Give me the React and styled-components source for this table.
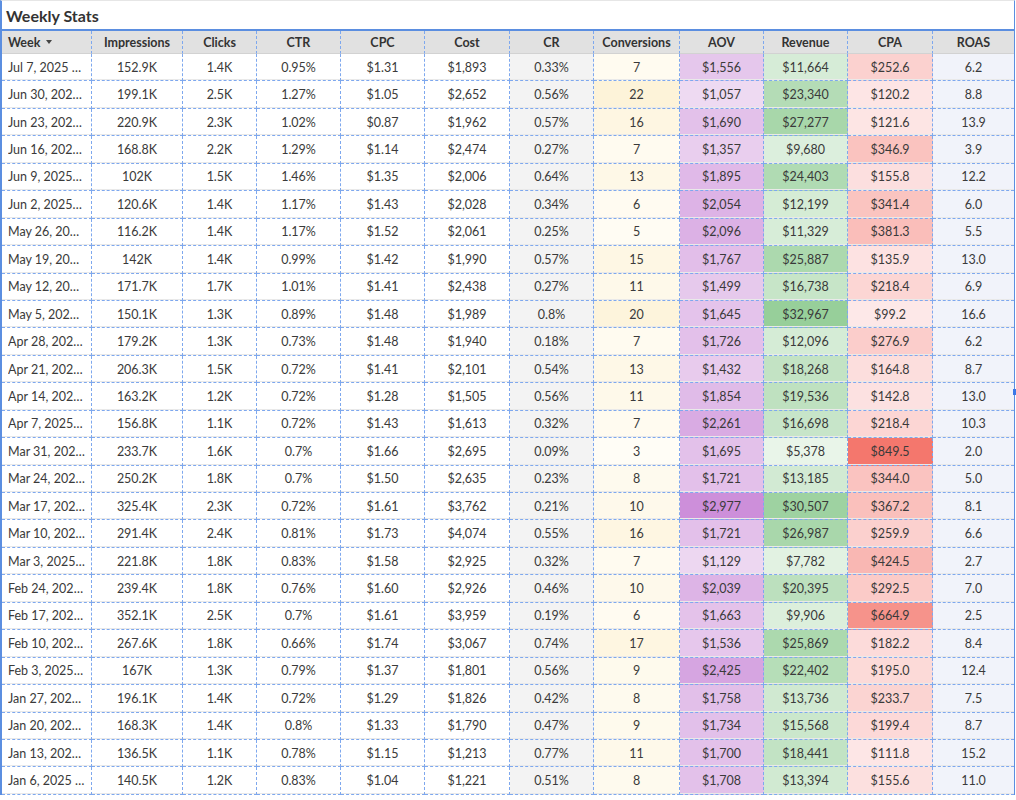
import React from "react";
import styled, { createGlobalStyle } from "styled-components";

const GlobalStyle = createGlobalStyle`
  html, body {
    margin: 0;
    padding: 0;
    background: #fff;
  }
  body {
    font-family: Lato, "Open Sans", sans-serif;
    color: #333;
  }
`;

const ROWS = [
  ["Jul 7, 2025 - Jul 13, 2025", "152.9K", "1.4K", "0.95%", "$1.31", "$1,893", "0.33%", 7, 1556, 11664, 252.6, "6.2"],
  ["Jun 30, 2025 - Jul 6, 2025", "199.1K", "2.5K", "1.27%", "$1.05", "$2,652", "0.56%", 22, 1057, 23340, 120.2, "8.8"],
  ["Jun 23, 2025 - Jun 29, 2025", "220.9K", "2.3K", "1.02%", "$0.87", "$1,962", "0.57%", 16, 1690, 27277, 121.6, "13.9"],
  ["Jun 16, 2025 - Jun 22, 2025", "168.8K", "2.2K", "1.29%", "$1.14", "$2,474", "0.27%", 7, 1357, 9680, 346.9, "3.9"],
  ["Jun 9, 2025 - Jun 15, 2025", "102K", "1.5K", "1.46%", "$1.35", "$2,006", "0.64%", 13, 1895, 24403, 155.8, "12.2"],
  ["Jun 2, 2025 - Jun 8, 2025", "120.6K", "1.4K", "1.17%", "$1.43", "$2,028", "0.34%", 6, 2054, 12199, 341.4, "6.0"],
  ["May 26, 2025 - Jun 1, 2025", "116.2K", "1.4K", "1.17%", "$1.52", "$2,061", "0.25%", 5, 2096, 11329, 381.3, "5.5"],
  ["May 19, 2025 - May 25, 2025", "142K", "1.4K", "0.99%", "$1.42", "$1,990", "0.57%", 15, 1767, 25887, 135.9, "13.0"],
  ["May 12, 2025 - May 18, 2025", "171.7K", "1.7K", "1.01%", "$1.41", "$2,438", "0.27%", 11, 1499, 16738, 218.4, "6.9"],
  ["May 5, 2025 - May 11, 2025", "150.1K", "1.3K", "0.89%", "$1.48", "$1,989", "0.8%", 20, 1645, 32967, 99.2, "16.6"],
  ["Apr 28, 2025 - May 4, 2025", "179.2K", "1.3K", "0.73%", "$1.48", "$1,940", "0.18%", 7, 1726, 12096, 276.9, "6.2"],
  ["Apr 21, 2025 - Apr 27, 2025", "206.3K", "1.5K", "0.72%", "$1.41", "$2,101", "0.54%", 13, 1432, 18268, 164.8, "8.7"],
  ["Apr 14, 2025 - Apr 20, 2025", "163.2K", "1.2K", "0.72%", "$1.28", "$1,505", "0.56%", 11, 1854, 19536, 142.8, "13.0"],
  ["Apr 7, 2025 - Apr 13, 2025", "156.8K", "1.1K", "0.72%", "$1.43", "$1,613", "0.32%", 7, 2261, 16698, 218.4, "10.3"],
  ["Mar 31, 2025 - Apr 6, 2025", "233.7K", "1.6K", "0.7%", "$1.66", "$2,695", "0.09%", 3, 1695, 5378, 849.5, "2.0"],
  ["Mar 24, 2025 - Mar 30, 2025", "250.2K", "1.8K", "0.7%", "$1.50", "$2,635", "0.23%", 8, 1721, 13185, 344.0, "5.0"],
  ["Mar 17, 2025 - Mar 23, 2025", "325.4K", "2.3K", "0.72%", "$1.61", "$3,762", "0.21%", 10, 2977, 30507, 367.2, "8.1"],
  ["Mar 10, 2025 - Mar 16, 2025", "291.4K", "2.4K", "0.81%", "$1.73", "$4,074", "0.55%", 16, 1721, 26987, 259.9, "6.6"],
  ["Mar 3, 2025 - Mar 9, 2025", "221.8K", "1.8K", "0.83%", "$1.58", "$2,925", "0.32%", 7, 1129, 7782, 424.5, "2.7"],
  ["Feb 24, 2025 - Mar 2, 2025", "239.4K", "1.8K", "0.76%", "$1.60", "$2,926", "0.46%", 10, 2039, 20395, 292.5, "7.0"],
  ["Feb 17, 2025 - Feb 23, 2025", "352.1K", "2.5K", "0.7%", "$1.61", "$3,959", "0.19%", 6, 1663, 9906, 664.9, "2.5"],
  ["Feb 10, 2025 - Feb 16, 2025", "267.6K", "1.8K", "0.66%", "$1.74", "$3,067", "0.74%", 17, 1536, 25869, 182.2, "8.4"],
  ["Feb 3, 2025 - Feb 9, 2025", "167K", "1.3K", "0.79%", "$1.37", "$1,801", "0.56%", 9, 2425, 22402, 195.0, "12.4"],
  ["Jan 27, 2025 - Feb 2, 2025", "196.1K", "1.4K", "0.72%", "$1.29", "$1,826", "0.42%", 8, 1758, 13736, 233.7, "7.5"],
  ["Jan 20, 2025 - Jan 26, 2025", "168.3K", "1.4K", "0.8%", "$1.33", "$1,790", "0.47%", 9, 1734, 15568, 199.4, "8.7"],
  ["Jan 13, 2025 - Jan 19, 2025", "136.5K", "1.1K", "0.78%", "$1.15", "$1,213", "0.77%", 11, 1700, 18441, 111.8, "15.2"],
  ["Jan 6, 2025 - Jan 12, 2025", "140.5K", "1.2K", "0.83%", "$1.04", "$1,221", "0.51%", 8, 1708, 13394, 155.6, "11.0"],
];

const HEADERS = ["Week", "Impressions", "Clicks", "CTR", "CPC", "Cost", "CR", "Conversions", "AOV", "Revenue", "CPA", "ROAS"];
const WIDTHS = "90px 91px 74px 84px 84px 85px 84px 86px 84px 84px 85px 81px";

// heatmap columns: light colour for the minimum, strong colour for the maximum
const SCALES = {
  7: ["#fffdf6", "#fdf3d9"],
  8: ["#eedaf2", "#cd8fda"],
  9: ["#e9f5e9", "#97cf9a"],
  10: ["#fde8e8", "#f4776d"],
};

const hex = (h) => [1, 3, 5].map((i) => parseInt(h.slice(i, i + 2), 16));
const mix = (a, b, t) => {
  const ca = hex(a);
  const cb = hex(b);
  return `rgb(${ca.map((v, i) => Math.round(v + (cb[i] - v) * t)).join(",")})`;
};

const ranges = {};
Object.keys(SCALES).forEach((k) => {
  const vals = ROWS.map((r) => r[k]);
  ranges[k] = [Math.min(...vals), Math.max(...vals)];
});

const fmt = (col, v) => {
  if (col === 8 || col === 9) return "$" + v.toLocaleString("en-US");
  if (col === 10) return "$" + v.toFixed(1);
  return v;
};

const Frame = styled.div`
  position: relative;
  width: 1015px;
  box-sizing: border-box;
  border-left: 2px solid #5b8ee0;
  border-right: 1px solid #5b8ee0;
  border-top: 1px solid #e6e6e6;
  font-family: Lato, "Open Sans", sans-serif;
`;

const Title = styled.div`
  height: 28px;
  display: flex;
  align-items: center;
  padding-left: 4px;
  font-size: 16px;
  font-weight: 700;
  color: #333;
  border-bottom: 2px solid #5b8ee0;
`;

const Row = styled.div`
  display: grid;
  grid-template-columns: ${WIDTHS};
  height: ${(p) => (p.$head ? "23px" : "27.45px")};
  background: ${(p) => (p.$head ? "#e1e1e1" : "#fff")};
`;

const Cell = styled.div`
  box-sizing: border-box;
  display: flex;
  align-items: center;
  justify-content: ${(p) => (p.$left ? "flex-start" : "center")};
  padding: ${(p) => (p.$left ? "0 6px 0 6px" : "0 4px")};
  font-size: 12.5px;
  font-weight: ${(p) => (p.$head ? 700 : 400)};
  color: ${(p) => (p.$head ? "#333" : "#3a3a3a")};
  border-right: ${(p) => (p.$last ? "none" : "1px dashed #7ea8ee")};
  border-bottom: ${(p) => (p.$head ? "1px solid #d2d2d2" : "1px dashed #7ea8ee")};
  box-shadow: ${(p) => (p.$head ? "none" : "inset 0 -1px 0 #e9e9e9")};
  white-space: nowrap;
  overflow: hidden;
  min-width: 0;
`;

const Ellipsis = styled.span`
  overflow: hidden;
  text-overflow: ellipsis;
  white-space: nowrap;
  min-width: 0;
`;

const Caret = styled.svg`
  margin-left: 6px;
  flex: none;
`;

const Handle = styled.div`
  position: absolute;
  right: -3px;
  top: 388px;
  width: 4px;
  height: 6px;
  background: #3b78e7;
`;

const staticBg = { 6: "#f3f3f3", 11: "#f1f3fa" };

export default function App() {
  return (
    <>
      <GlobalStyle />
      <Frame>
        <Title>Weekly Stats</Title>
        <Row $head>
          {HEADERS.map((h, i) => (
            <Cell key={h} $head $left={i === 0} $last={i === 11}>
              {h}
              {i === 0 && (
                <Caret width="6" height="4" viewBox="0 0 6 4">
                  <path d="M0 0h6L3 4z" fill="#444" />
                </Caret>
              )}
            </Cell>
          ))}
        </Row>
        {ROWS.map((r) => (
          <Row key={r[0]}>
            {r.map((v, i) => {
              let bg = staticBg[i];
              if (SCALES[i]) {
                const [lo, hi] = ranges[i];
                bg = mix(SCALES[i][0], SCALES[i][1], (v - lo) / (hi - lo));
              }
              return (
                <Cell key={i} $left={i === 0} $last={i === 11} style={bg ? { background: bg } : undefined}>
                  {i === 0 ? <Ellipsis>{v}</Ellipsis> : fmt(i, v)}
                </Cell>
              );
            })}
          </Row>
        ))}
        <Handle />
      </Frame>
    </>
  );
}
